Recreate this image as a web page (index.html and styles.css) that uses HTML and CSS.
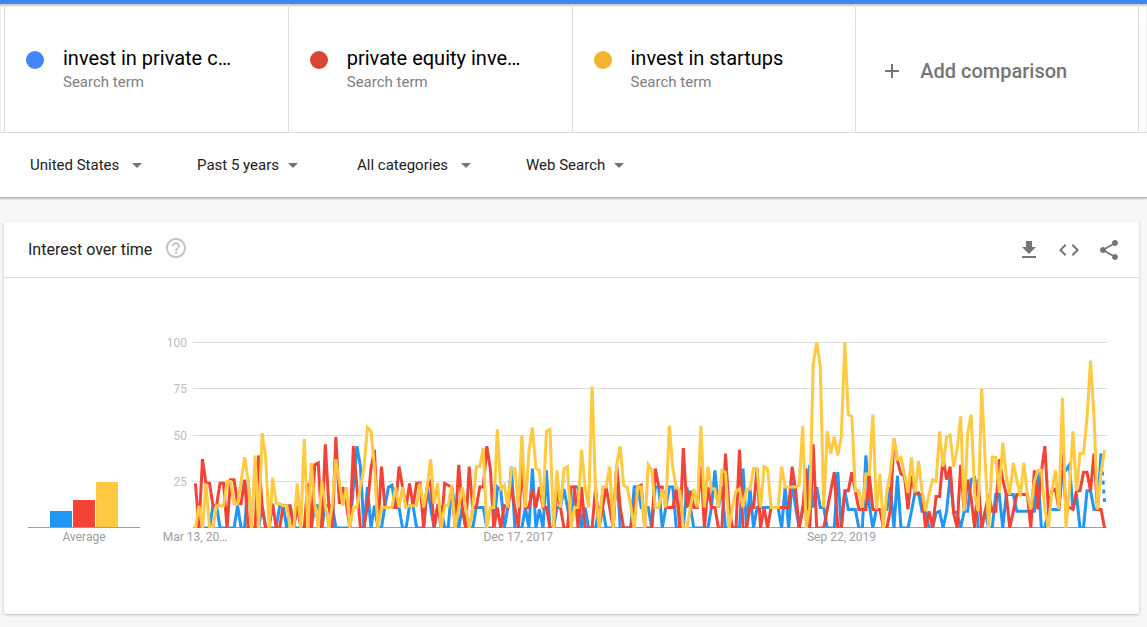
FILE: index.html
```html
<!DOCTYPE html>
<html lang="en">
<head>
    <meta charset="UTF-8">
    <title>Interest over time</title>
    <meta name="viewport" content="width=device-width, initial-scale=1.0">
    <link rel="stylesheet" href="styles.css">
</head>
<body>

    <header class="explore-header">
        <!-- Compared search terms -->
        <div class="terms">
            <div class="term">
                <span class="dot dot-blue"></span>
                <div>
                    <div class="term-name">invest in private c…</div>
                    <div class="term-type">Search term</div>
                </div>
            </div>
            <div class="term">
                <span class="dot dot-red"></span>
                <div>
                    <div class="term-name">private equity inve…</div>
                    <div class="term-type">Search term</div>
                </div>
            </div>
            <div class="term">
                <span class="dot dot-yellow"></span>
                <div>
                    <div class="term-name">invest in startups</div>
                    <div class="term-type">Search term</div>
                </div>
            </div>
            <button class="term add-term" type="button">
                <svg width="24" height="24" viewBox="0 0 24 24"><path d="M19 13h-6v6h-2v-6H5v-2h6V5h2v6h6z"/></svg>
                <span>Add comparison</span>
            </button>
        </div>

        <!-- Filters -->
        <div class="filters">
            <div class="filter filter-picker">
                <select aria-label="Region"><option>United States</option></select>
                <svg width="10" height="5" viewBox="0 0 10 5"><path d="M0 0h10L5 5z"/></svg>
            </div>
            <div class="filter">
                <select aria-label="Time range"><option>Past 5 years</option></select>
                <svg width="10" height="5" viewBox="0 0 10 5"><path d="M0 0h10L5 5z"/></svg>
            </div>
            <div class="filter filter-picker">
                <select aria-label="Category"><option>All categories</option></select>
                <svg width="10" height="5" viewBox="0 0 10 5"><path d="M0 0h10L5 5z"/></svg>
            </div>
            <div class="filter">
                <select aria-label="Search type"><option>Web Search</option></select>
                <svg width="10" height="5" viewBox="0 0 10 5"><path d="M0 0h10L5 5z"/></svg>
            </div>
        </div>
    </header>

    <main class="card">
        <div class="card-header">
            <h1>Interest over time</h1>
            <button class="icon-button help" type="button" aria-label="Help">
                <svg width="24" height="24" viewBox="0 0 24 24"><path d="M11 18h2v-2h-2v2zm1-16C6.480 2 2 6.480 2 12s4.480 10 10 10 10-4.480 10-10S17.520 2 12 2zm0 18c-4.410 0-8-3.590-8-8s3.590-8 8-8 8 3.590 8 8-3.590 8-8 8zm0-14c-2.210 0-4 1.790-4 4h2c0-1.100.9-2 2-2s2 .9 2 2c0 2-3 1.750-3 5h2c0-2.250 3-2.500 3-5 0-2.210-1.790-4-4-4z"/></svg>
            </button>
            <div class="card-actions">
                <button class="icon-button" type="button" aria-label="Download">
                    <svg width="24" height="24" viewBox="0 0 24 24"><path d="M19 9h-4V3H9v6H5l7 7 7-7zM5 18v2h14v-2H5z"/></svg>
                </button>
                <button class="icon-button" type="button" aria-label="Embed">
                    <svg width="24" height="24" viewBox="0 0 24 24"><path d="M9.400 16.600L4.800 12l4.600-4.600L8 6l-6 6 6 6 1.400-1.400zm5.200 0l4.600-4.600-4.600-4.600L16 6l6 6-6 6-1.400-1.400z"/></svg>
                </button>
                <button class="icon-button" type="button" aria-label="Share">
                    <svg width="24" height="24" viewBox="0 0 24 24"><path d="M18 16.080c-.76 0-1.440.3-1.960.77L8.910 12.700c.05-.23.09-.46.09-.7s-.04-.47-.09-.7l7.050-4.110c.54.5 1.250.81 2.040.81 1.660 0 3-1.340 3-3s-1.340-3-3-3-3 1.340-3 3c0 .24.04.47.09.7L8.040 9.810C7.500 9.310 6.790 9 6 9c-1.660 0-3 1.340-3 3s1.340 3 3 3c.79 0 1.500-.31 2.040-.81l7.120 4.160c-.05.21-.08.43-.08.65 0 1.610 1.310 2.920 2.920 2.920s2.920-1.310 2.920-2.920-1.310-2.920-2.920-2.920z"/></svg>
                </button>
            </div>
        </div>

        <div class="card-body">
            <div class="average">
                <div class="average-bars" id="averageBars"></div>
                <div class="axis-label">Average</div>
            </div>

            <div class="y-axis">
                <span>100</span>
                <span>75</span>
                <span>50</span>
                <span>25</span>
            </div>

            <div class="timeline">
                <div class="plot">
                    <div class="grid-row"></div>
                    <div class="grid-row"></div>
                    <div class="grid-row"></div>
                    <div class="grid-row"></div>
                    <svg class="lines" id="lines" viewBox="-0.7 0 260.4 100" preserveAspectRatio="none"></svg>
                </div>
                <div class="x-axis">
                    <span class="axis-label">Mar 13, 20…</span>
                    <span class="axis-label">Dec 17, 2017</span>
                    <span class="axis-label">Sep 22, 2019</span>
                </div>
            </div>
        </div>
    </main>

    <script src="chart.js"></script>
</body>
</html>
```
FILE: styles.css
```css
* {
    box-sizing: border-box;
}

body {
    margin: 0;
    background: #f7f7f7;
    font-family: Roboto, "Liberation Sans", sans-serif;
    color: #212121;
}

button,
select {
    border: none;
    background: none;
    padding: 0;
    font-family: inherit;
    cursor: pointer;
}

svg {
    display: block;
    fill: #757575;
}

.explore-header {
    background: #fff;
    border-top: 4px solid #4285f4;
    border-bottom: 1px solid #b4b8b6;
    box-shadow: 0 1px 2px rgba(0, 0, 0, 0.25);
}

/* Terms */
.terms {
    display: grid;
    grid-template-columns: repeat(4, 1fr);
    padding: 0 8px 0 4px;
    border-bottom: 1px solid #dcdcdc;
    box-shadow: inset 0 2px 2px rgba(0, 0, 0, 0.22);
}

.term {
    display: flex;
    gap: 19px;
    height: 128px;
    padding: 40px 0 0 21px;
    border-left: 1px solid #dcdcdc;
}

.term:last-child {
    border-right: 1px solid #dcdcdc;
}

.dot {
    width: 18px;
    height: 18px;
    margin-top: 7px;
    border-radius: 50%;
}

.dot-blue {
    background: #4285f4;
}

.dot-red {
    background: #db4437;
}

.dot-yellow {
    background: #f4b32c;
}

.term-name {
    font-size: 20px;
    line-height: 28px;
    color: #000;
}

.term-type {
    font-size: 15px;
    line-height: 20px;
    color: #808080;
}

.add-term {
    align-items: center;
    gap: 16px;
    padding: 6px 0 0 24px;
    font-size: 20px;
    font-weight: 500;
    color: #757575;
}

/* Filters */
.filters {
    display: flex;
    height: 64px;
    padding-left: 30px;
}

.filter {
    display: flex;
    align-items: center;
    gap: 8px;
    margin-right: 59px;
}

.filter-picker {
    gap: 12px;
    margin-right: 55px;
}

.filter select {
    appearance: none;
    font-size: 15px;
    line-height: 20px;
    color: #212121;
}

/* Chart card */
.card {
    margin: 24px 8px 12px 4px;
    background: #fff;
    border-radius: 2px;
    box-shadow: 0 1px 3px rgba(0, 0, 0, 0.24);
}

.card-header {
    display: flex;
    align-items: center;
    height: 56px;
    padding: 0 18px 0 24px;
    border-bottom: 1px solid #dcdcdc;
}

.card-header h1 {
    margin: 0;
    font-size: 16px;
    font-weight: 400;
}

.help {
    margin: 0 0 4px 12px;
}

.help svg {
    fill: #c4c4c4;
}

.card-actions {
    display: flex;
    gap: 16px;
    margin-left: auto;
}

.card-body {
    display: flex;
    padding: 64px 32px 68px 24px;
}

.average {
    width: 112px;
}

.average-bars {
    display: flex;
    justify-content: center;
    align-items: flex-end;
    gap: 1px;
    height: 186px;
    border-bottom: 1px solid #9e9e9e;
}

.average-bar {
    width: 22px;
}

.axis-label {
    font-size: 12px;
    line-height: 18px;
    color: #9e9e9e;
    text-align: center;
}

.y-axis {
    display: grid;
    grid-template-rows: repeat(4, 1fr);
    width: 47px;
    height: 185px;
    margin: -8px 6px 0 0;
    font-size: 12px;
    line-height: 18px;
    color: #bdbdbd;
    text-align: right;
}

.timeline {
    flex: 1;
}

.plot {
    position: relative;
    display: grid;
    grid-template-rows: repeat(4, 1fr);
    height: 186px;
    border-bottom: 1px solid #9e9e9e;
}

.grid-row {
    border-top: 1px solid #dedede;
}

.lines {
    position: absolute;
    top: 0;
    left: 0;
    width: 100%;
    height: 186px;
    fill: none;
}

.lines polyline {
    fill: none;
    stroke-width: 3px;
    vector-effect: non-scaling-stroke;
}

/* columns follow the week index of each date */
.x-axis {
    display: grid;
    grid-template-columns: 92fr 92fr 75fr;
    padding: 0 2px;
}

.x-axis .axis-label {
    width: max-content;
    transform: translateX(-50%);
}
```
FILE: chart.js
```js
// weekly values, Mar 2016 - Mar 2021
const series = [
    {
        color: '#2196f3',
        average: 8.700,
        values: [
            0, 0, 0, 0, 0, 12, 12, 0, 0, 0, 0, 0, 12, 0, 0, 26, 0, 0, 0, 12,
            0, 0, 0, 0, 12, 12, 0, 12, 0, 0, 0, 0, 0, 0, 12, 12, 0, 12, 12, 12,
            0, 0, 0, 0, 0, 22, 44, 33, 0, 22, 0, 12, 0, 0, 12, 22, 23, 11, 11, 0,
            0, 12, 12, 0, 0, 0, 22, 11, 0, 12, 11, 0, 0, 22, 11, 0, 11, 0, 0, 0,
            11, 11, 11, 0, 0, 0, 22, 20, 0, 11, 33, 0, 0, 0, 11, 0, 32, 0, 10, 0,
            31, 0, 0, 11, 11, 21, 11, 0, 22, 22, 0, 11, 0, 0, 0, 11, 11, 0, 0, 0,
            33, 0, 0, 0, 0, 22, 22, 11, 11, 11, 0, 22, 22, 0, 11, 22, 22, 0, 0, 0,
            22, 11, 0, 0, 0, 0, 0, 11, 31, 11, 22, 0, 0, 0, 0, 0, 32, 0, 21, 0,
            11, 11, 11, 11, 11, 11, 11, 0, 22, 0, 25, 11, 0, 11, 11, 34, 11, 22, 11, 11,
            0, 0, 0, 30, 0, 20, 10, 10, 10, 0, 0, 39, 12, 0, 10, 10, 10, 10, 22, 0,
            28, 0, 0, 0, 9, 19, 19, 9, 9, 0, 0, 8, 9, 0, 9, 28, 9, 8, 0, 9,
            9, 26, 27, 0, 0, 9, 0, 0, 18, 18, 0, 18, 18, 18, 9, 9, 9, 9, 9, 9,
            30, 0, 0, 10, 10, 10, 10, 30, 31, 34, 10, 18, 0, 0, 20, 20, 10, 10, 40
        ],
        // last week is still incomplete
        partial: [[258, 40], [259, 14]]
    },
    {
        color: '#f44336',
        average: 14.600,
        values: [
            24, 0, 37, 24, 24, 12, 12, 24, 24, 0, 26, 26, 13, 13, 26, 0, 0, 0, 39, 12,
            0, 0, 13, 0, 0, 12, 12, 12, 0, 12, 0, 0, 24, 0, 34, 35, 0, 45, 12, 0,
            49, 13, 22, 13, 0, 44, 22, 0, 0, 12, 32, 42, 0, 33, 11, 11, 11, 11, 33, 22,
            11, 24, 12, 24, 24, 0, 22, 25, 0, 12, 0, 24, 23, 22, 0, 34, 11, 0, 33, 11,
            11, 22, 22, 44, 32, 0, 11, 0, 12, 11, 22, 11, 0, 33, 11, 11, 21, 11, 22, 11,
            11, 0, 0, 20, 11, 0, 0, 22, 22, 0, 22, 0, 0, 0, 22, 0, 11, 22, 11, 0,
            34, 11, 0, 0, 0, 11, 22, 23, 0, 0, 0, 32, 22, 22, 11, 11, 11, 21, 0, 43,
            11, 20, 11, 11, 33, 0, 22, 11, 11, 0, 0, 40, 11, 0, 0, 42, 0, 0, 11, 11,
            32, 0, 11, 0, 11, 11, 11, 11, 11, 11, 33, 20, 0, 10, 32, 0, 45, 0, 0, 0,
            10, 20, 30, 0, 0, 20, 20, 30, 20, 10, 10, 10, 28, 10, 10, 10, 0, 0, 10, 48,
            36, 29, 28, 10, 28, 19, 18, 18, 0, 9, 0, 17, 17, 38, 26, 33, 8, 0, 34, 9,
            26, 16, 0, 26, 0, 9, 18, 9, 9, 37, 26, 18, 0, 9, 18, 18, 18, 18, 0, 31,
            10, 30, 44, 10, 20, 21, 10, 40, 10, 11, 10, 20, 20, 30, 30, 20, 40, 10, 10, 0
        ]
    },
    {
        color: '#ffca41',
        average: 24.400,
        values: [
            0, 12, 0, 24, 0, 0, 12, 12, 12, 25, 25, 13, 13, 25, 38, 26, 0, 39, 0, 51,
            38, 0, 27, 13, 13, 12, 12, 0, 0, 24, 0, 48, 0, 35, 12, 0, 25, 12, 0, 13,
            37, 25, 12, 22, 0, 11, 11, 22, 32, 54, 52, 33, 0, 11, 11, 11, 11, 22, 11, 22,
            11, 12, 12, 12, 24, 11, 22, 37, 13, 24, 0, 12, 12, 23, 0, 11, 22, 11, 0, 11,
            33, 33, 43, 0, 11, 11, 53, 21, 23, 11, 32, 32, 11, 50, 11, 41, 54, 32, 31, 11,
            52, 53, 0, 31, 11, 32, 33, 0, 11, 11, 42, 22, 11, 76, 20, 0, 22, 22, 33, 0,
            34, 44, 23, 22, 12, 0, 22, 22, 0, 34, 31, 11, 11, 21, 11, 55, 32, 22, 20, 0,
            0, 11, 21, 11, 55, 11, 33, 21, 21, 11, 31, 30, 0, 11, 20, 21, 11, 21, 21, 32,
            32, 11, 33, 32, 11, 11, 11, 33, 22, 22, 22, 22, 23, 55, 0, 11, 88, 100, 87, 11,
            52, 40, 49, 39, 49, 100, 61, 60, 20, 20, 11, 29, 29, 61, 10, 29, 0, 20, 30, 48,
            37, 38, 29, 19, 38, 19, 36, 20, 9, 18, 26, 25, 52, 33, 49, 50, 33, 42, 60, 9,
            51, 61, 18, 9, 75, 36, 0, 38, 38, 19, 46, 28, 18, 35, 26, 17, 35, 18, 10, 25,
            31, 31, 10, 0, 20, 31, 10, 70, 0, 21, 52, 20, 40, 40, 59, 90, 60, 10, 30, 42
        ]
    }
];

const lines = document.getElementById('lines');
const bars = document.getElementById('averageBars');

function drawLine(points, color, dashed) {
    const line = document.createElementNS('http://www.w3.org/2000/svg', 'polyline');
    line.setAttribute('points', points.map(([x, y]) => x + ',' + (100 - y)).join(' '));
    line.setAttribute('stroke', color);
    if (dashed) {
        line.setAttribute('stroke-dasharray', '4 5');
    }
    lines.appendChild(line);
}

series.forEach(item => {
    drawLine(item.values.map((value, week) => [week, value]), item.color, false);
    if (item.partial) {
        drawLine(item.partial, item.color, true);
    }

    const bar = document.createElement('div');
    bar.className = 'average-bar';
    bar.style.height = item.average + '%';
    bar.style.background = item.color;
    bars.appendChild(bar);
});
```
